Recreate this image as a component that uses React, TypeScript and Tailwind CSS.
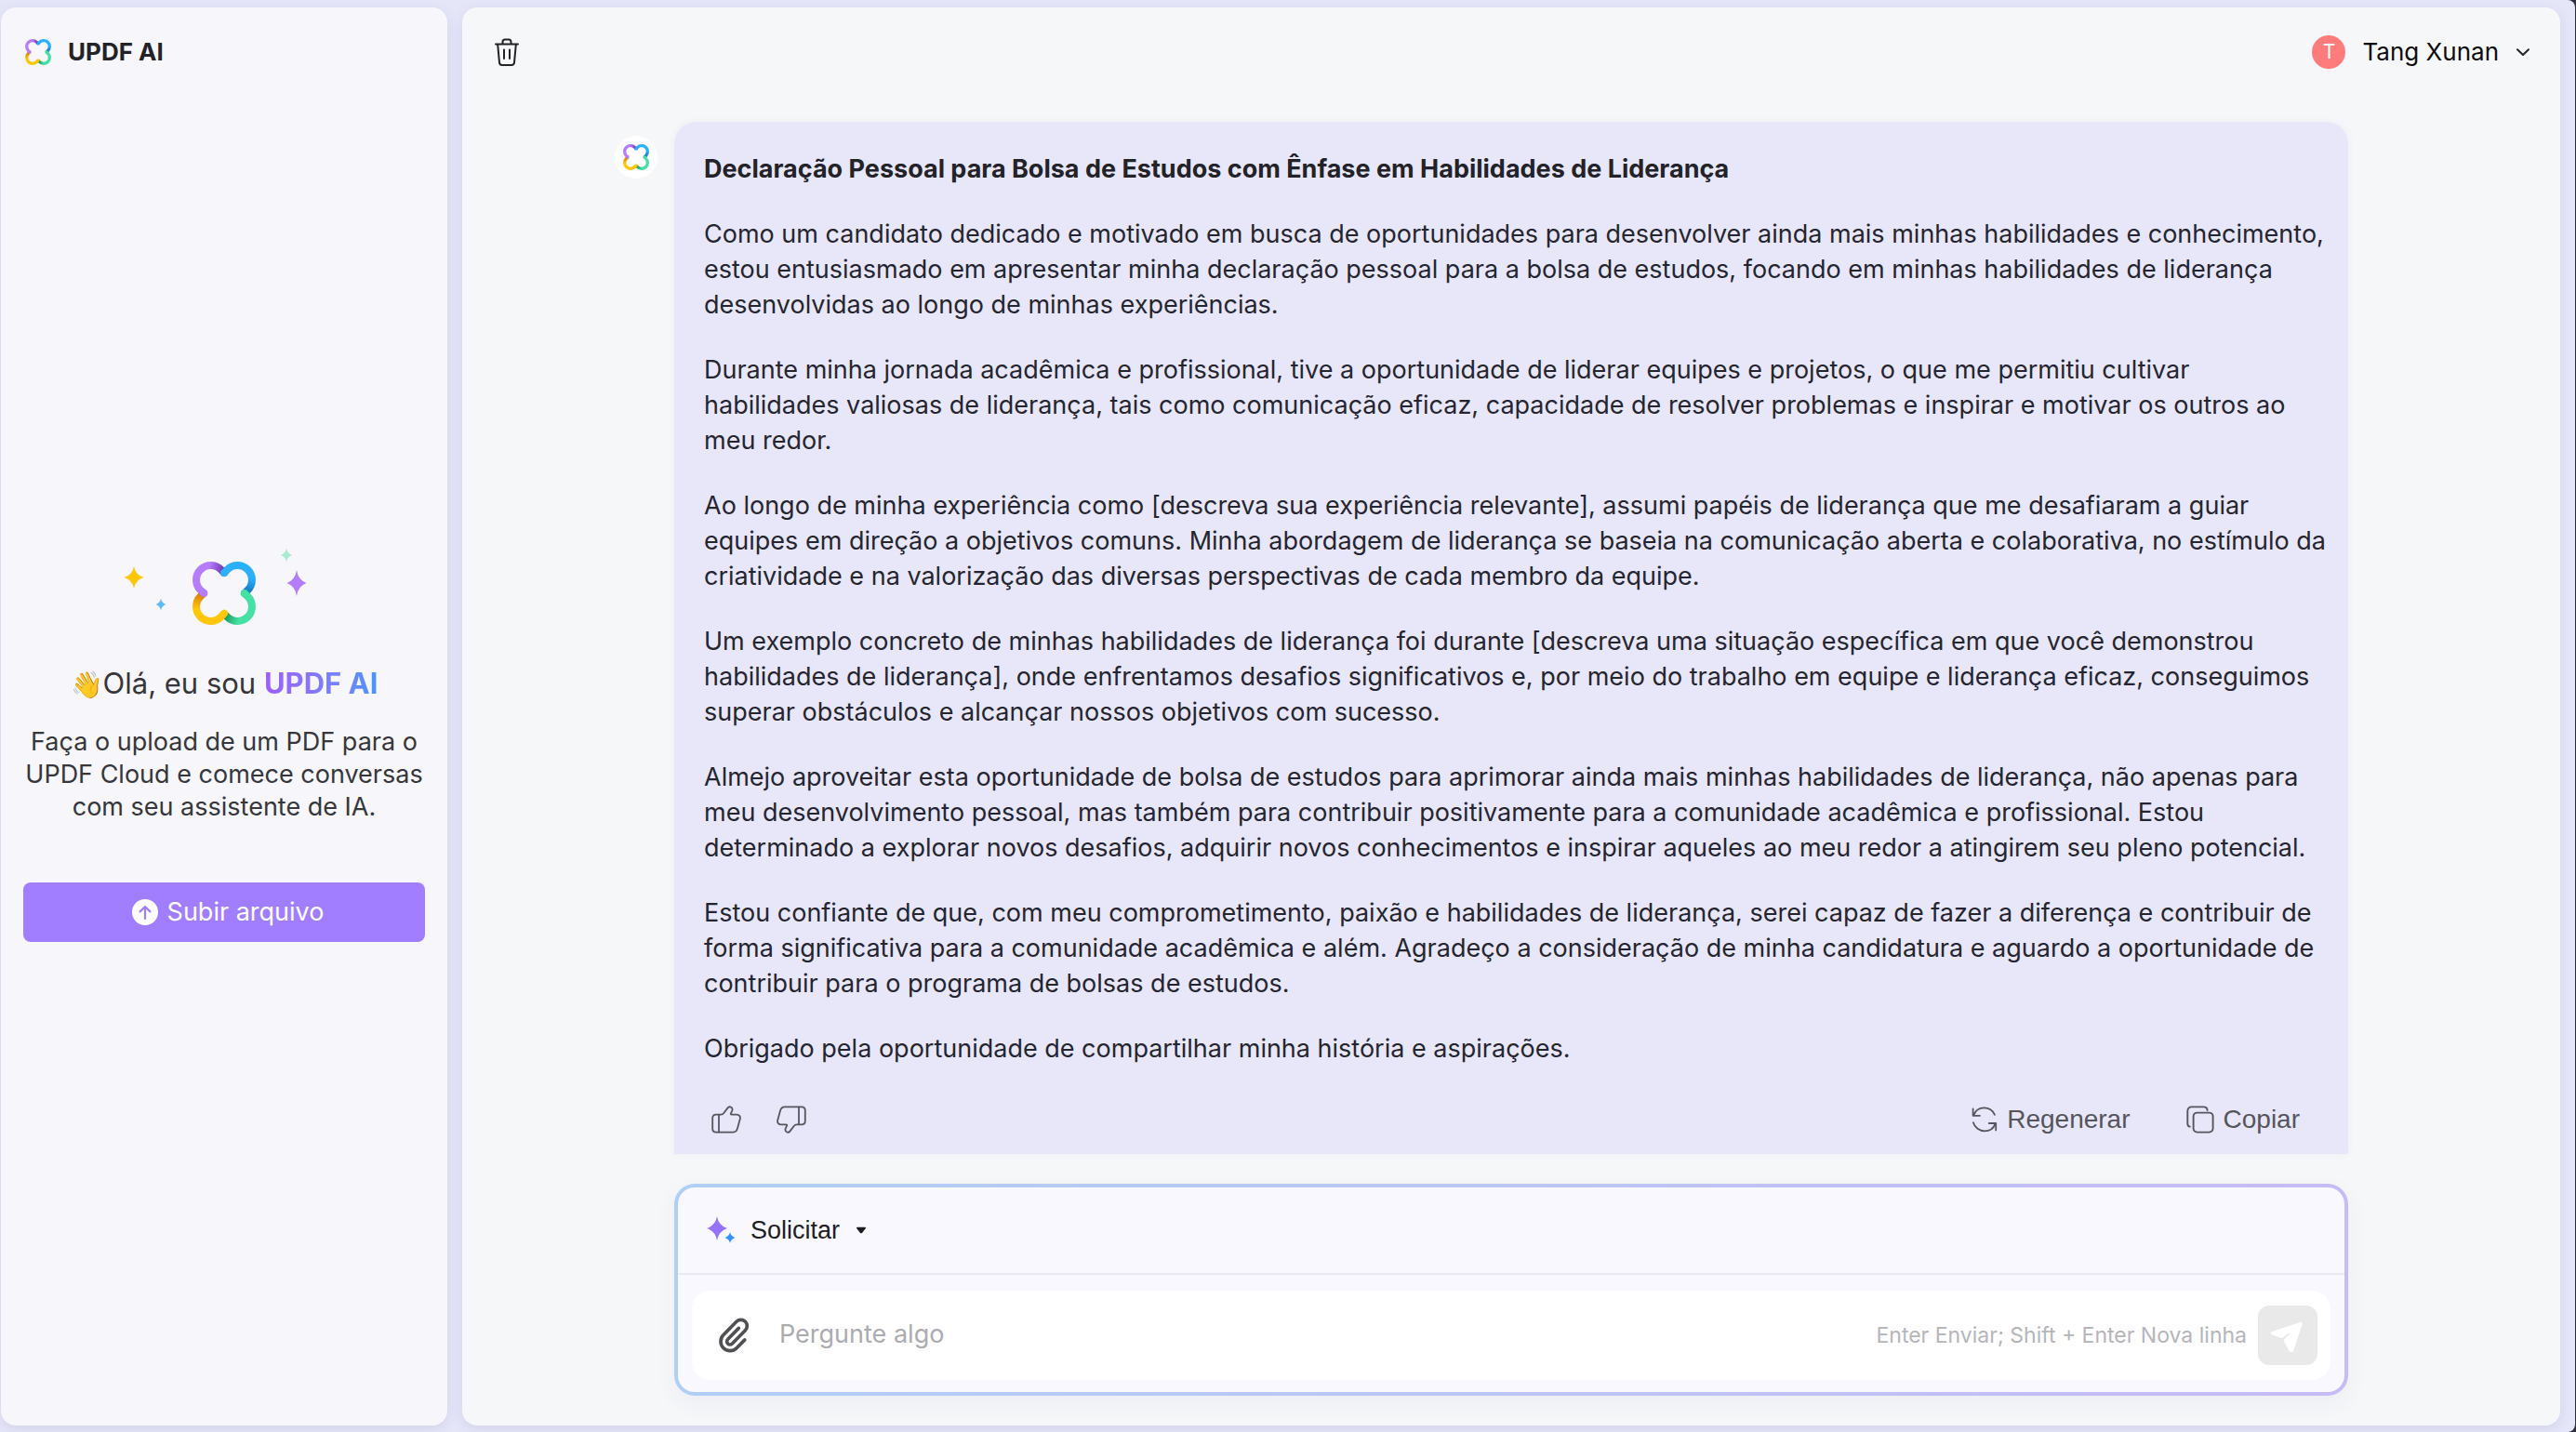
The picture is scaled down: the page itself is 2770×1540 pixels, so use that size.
import React from "react";

const PARAGRAPHS: string[][] = [
  [
    "Como um candidato dedicado e motivado em busca de oportunidades para desenvolver ainda mais minhas habilidades e conhecimento,",
    "estou entusiasmado em apresentar minha declaração pessoal para a bolsa de estudos, focando em minhas habilidades de liderança",
    "desenvolvidas ao longo de minhas experiências.",
  ],
  [
    "Durante minha jornada acadêmica e profissional, tive a oportunidade de liderar equipes e projetos, o que me permitiu cultivar",
    "habilidades valiosas de liderança, tais como comunicação eficaz, capacidade de resolver problemas e inspirar e motivar os outros ao",
    "meu redor.",
  ],
  [
    "Ao longo de minha experiência como [descreva sua experiência relevante], assumi papéis de liderança que me desafiaram a guiar",
    "equipes em direção a objetivos comuns. Minha abordagem de liderança se baseia na comunicação aberta e colaborativa, no estímulo da",
    "criatividade e na valorização das diversas perspectivas de cada membro da equipe.",
  ],
  [
    "Um exemplo concreto de minhas habilidades de liderança foi durante [descreva uma situação específica em que você demonstrou",
    "habilidades de liderança], onde enfrentamos desafios significativos e, por meio do trabalho em equipe e liderança eficaz, conseguimos",
    "superar obstáculos e alcançar nossos objetivos com sucesso.",
  ],
  [
    "Almejo aproveitar esta oportunidade de bolsa de estudos para aprimorar ainda mais minhas habilidades de liderança, não apenas para",
    "meu desenvolvimento pessoal, mas também para contribuir positivamente para a comunidade acadêmica e profissional. Estou",
    "determinado a explorar novos desafios, adquirir novos conhecimentos e inspirar aqueles ao meu redor a atingirem seu pleno potencial.",
  ],
  [
    "Estou confiante de que, com meu comprometimento, paixão e habilidades de liderança, serei capaz de fazer a diferença e contribuir de",
    "forma significativa para a comunidade acadêmica e além. Agradeço a consideração de minha candidatura e aguardo a oportunidade de",
    "contribuir para o programa de bolsas de estudos.",
  ],
  ["Obrigado pela oportunidade de compartilhar minha história e aspirações."],
];

/* Four interlocking petals, drawn on a 204-unit grid. */
function Petals({ id }: { id: string }) {
  return (
    <g fill="none" strokeWidth="24" strokeLinejoin="round">
      <defs>
        <linearGradient id={`${id}-y`} gradientUnits="userSpaceOnUse" x1="34" y1="104" x2="24" y2="156">
          <stop offset="0" stopColor="#d97a04" />
          <stop offset="1" stopColor="#ffc60a" />
        </linearGradient>
        <linearGradient id={`${id}-p`} gradientUnits="userSpaceOnUse" x1="100" y1="34" x2="52" y2="20">
          <stop offset="0" stopColor="#6d35ad" />
          <stop offset="1" stopColor="#b57dfb" />
        </linearGradient>
        <linearGradient id={`${id}-b`} gradientUnits="userSpaceOnUse" x1="174" y1="100" x2="188" y2="52">
          <stop offset="0" stopColor="#1274bd" />
          <stop offset="1" stopColor="#2bb0fd" />
        </linearGradient>
        <linearGradient id={`${id}-g`} gradientUnits="userSpaceOnUse" x1="104" y1="172" x2="150" y2="186">
          <stop offset="0" stopColor="#15985c" />
          <stop offset="1" stopColor="#45e0a3" />
        </linearGradient>
      </defs>
      <path stroke={`url(#${id}-y)`} d="M36 102 L26 112 A46.67 46.67 0 1 0 92 178 L102 168" />
      <path stroke={`url(#${id}-p)`} d="M102 36 L92 26 A46.67 46.67 0 1 0 26 92 L37 102" />
      <circle cx="37" cy="102" r="12" fill="#b57dfb" stroke="none" />
      <path stroke={`url(#${id}-b)`} d="M168 102 L178 92 A46.67 46.67 0 1 0 112 26 L102 37" />
      <circle cx="102" cy="37" r="12" fill="#2bb0fd" stroke="none" />
      <path stroke={`url(#${id}-g)`} d="M102 168 L112 178 A46.67 46.67 0 1 0 178 112 L167 102" />
      <circle cx="167" cy="102" r="12" fill="#45e0a3" stroke="none" />
      <path stroke="#ffc60a" strokeLinecap="round" d="M92 178 L102 167" />
    </g>
  );
}

function Logo({ id }: { id: string }) {
  return (
    <svg viewBox="0 0 204 204" className="size-7 shrink-0" aria-hidden="true">
      <Petals id={id} />
    </svg>
  );
}

function Star({ cx, cy, w, h, fill }: { cx: number; cy: number; w: number; h: number; fill: string }) {
  const a = w * 0.24;
  const b = h * 0.24;
  return (
    <path
      fill={fill}
      d={`M${cx} ${cy - h} Q${cx + a * 0.6} ${cy - b} ${cx + w} ${cy} Q${cx + a * 0.6} ${cy + b} ${cx} ${cy + h} Q${cx - a * 0.6} ${cy + b} ${cx - w} ${cy} Q${cx - a * 0.6} ${cy - b} ${cx} ${cy - h}Z`}
    />
  );
}

function HeroArt() {
  return (
    <svg viewBox="0 0 220 90" className="h-[90px] w-[220px]" aria-hidden="true">
      <Star cx={13} cy={36} w={10.5} h={12} fill="#ffc60a" />
      <Star cx={42} cy={65} w={5.5} h={6.5} fill="#5cbcfa" />
      <Star cx={177} cy={12} w={6} h={7.5} fill="#a8ebcf" />
      <Star cx={188} cy={42} w={10.5} h={14} fill="#b57dfb" />
      <g transform="translate(76 19) scale(0.3333)">
        <Petals id="hero" />
      </g>
    </svg>
  );
}

function ThumbUp({ className }: { className: string }) {
  return (
    <svg viewBox="0 0 32 30" className={className} fill="none" stroke="#55555e" strokeWidth="1.8" strokeLinejoin="round" strokeLinecap="round" aria-hidden="true">
      <path d="M5 9.6H10.4C11.8 9.6 12.6 9 13.3 8L17.6 2.4C18.6 1.1 20.2 1 21.4 1.9C22.7 2.9 22.8 4.2 22.2 5.6L20.9 8.3C20.6 9.1 20.8 9.6 21.7 9.6H27C29.7 9.6 31.4 11.5 30.8 14.2L28 24.4C27.3 27.2 26 28.6 23.2 28.6H5C2.6 28.6 1.2 27.2 1.2 24.8V13.4C1.2 11 2.6 9.6 5 9.6Z" />
      <path d="M8 9.8V28.4" />
    </svg>
  );
}

export default function App() {
  return (
    <div className="min-h-screen bg-[#2f2e3c] pr-px font-['Inter','Liberation_Sans',sans-serif] text-[#25252d]">
      <div className="flex min-h-screen gap-4 rounded-r-lg bg-[#e6e6f9] pt-2 pr-4 pb-[7px] pl-px">
        <aside className="flex w-[480px] shrink-0 flex-col rounded-2xl bg-[#f6f6fb] shadow-[0_4px_14px_rgba(80,80,130,0.12)]">
          <header className="flex h-24 items-center gap-[18px] px-[26px]">
            <Logo id="brand" />
            <h1 className="text-[26px] leading-8 font-bold text-[#232327]">UPDF AI</h1>
          </header>
          <div className="flex flex-1 flex-col items-center justify-center px-6 pb-10">
            <HeroArt />
            <h2 className="mt-10 text-[31px] leading-10 whitespace-nowrap text-[#36363b]">
              <span className="text-[28px]">👋</span>Olá, eu sou{" "}
              <span className="bg-gradient-to-r from-[#a05cff] to-[#4a93ff] bg-clip-text font-bold text-transparent">UPDF AI</span>
            </h2>
            <p className="mt-6 text-center text-[27px] leading-[35px] whitespace-nowrap text-[#36363b]">
              Faça o upload de um PDF para o
              <br />
              UPDF Cloud e comece conversas
              <br />
              com seu assistente de IA.
            </p>
            <button type="button" className="mt-16 flex h-16 w-full items-center justify-center gap-2.5 rounded-lg bg-[#a17eff] pl-2 text-[27px] leading-9 text-white">
              <svg viewBox="0 0 28 28" className="size-7" fill="none" aria-hidden="true">
                <circle cx="14" cy="14" r="14" fill="#fff" />
                <path d="M14 21V8.2M8.6 13.4L14 8L19.4 13.4" stroke="#a17eff" strokeWidth="2.2" strokeLinecap="round" strokeLinejoin="round" />
              </svg>
              Subir arquivo
            </button>
          </div>
        </aside>

        <main className="flex min-w-0 flex-1 flex-col rounded-2xl bg-[#f6f7f9] pb-8 shadow-[0_4px_14px_rgba(80,80,130,0.12)]">
          <header className="flex h-24 items-center justify-between pr-[30px] pl-8">
            <button type="button" aria-label="Excluir conversa">
              <svg viewBox="0 0 32 32" className="size-8" fill="none" stroke="#222227" strokeWidth="2" strokeLinecap="round" strokeLinejoin="round" aria-hidden="true">
                <path d="M4 7.5H28M11.5 7.5V5.2C11.5 3.6 12.3 2.6 13.9 2.6H18.1C19.7 2.6 20.5 3.6 20.5 5.2V7.5" />
                <path d="M6.2 8L8 27.4C8.2 29.2 9.2 30 11 30H21C22.8 30 23.8 29.2 24 27.4L25.8 8" />
                <path d="M13 13.5V23M19 13.5V23" />
              </svg>
            </button>
            <button type="button" className="flex items-center text-[26px] leading-8 text-[#0c0c10]">
              <span className="mr-[18px] flex size-9 items-center justify-center rounded-full bg-[#ff7c7c] text-[21px] leading-6 text-white">T</span>
              Tang Xunan
              <svg viewBox="0 0 20 20" className="ml-4 size-5" fill="none" stroke="#222227" strokeWidth="2" strokeLinecap="round" strokeLinejoin="round" aria-hidden="true">
                <path d="M4 7.2L10 13L16 7.2" />
              </svg>
            </button>
          </header>

          <div className="grid grid-cols-[1fr_minmax(0,1800px)_1fr] pt-[27px]">
            <div className="mt-[15px] mr-[18px] flex size-[46px] items-center justify-center justify-self-end rounded-full bg-white">
              <Logo id="avatar" />
            </div>
            <article className="rounded-t-[24px] bg-[#e8e7f9] px-8 pt-8 pb-[15px] shadow-[0_0_8px_rgba(60,60,120,0.05)]">
              <div className="flex flex-col gap-8 text-[27px] leading-[38px] text-[#25252f]">
                <h3 className="font-bold text-[#222228]">Declaração Pessoal para Bolsa de Estudos com Ênfase em Habilidades de Liderança</h3>
                {PARAGRAPHS.map((lines, i) => (
                  <p key={i}>
                    {lines.map((line) => (
                      <span key={line} className="block whitespace-nowrap">
                        {line}
                      </span>
                    ))}
                  </p>
                ))}
              </div>
              <div className="mt-[35px] flex h-11 items-center justify-between pr-5 pl-2 font-['Liberation_Sans',sans-serif] text-[28px] leading-9 text-[#55555e]">
                <div className="flex gap-[38px]">
                  <button type="button" aria-label="Gostei">
                    <ThumbUp className="h-[30px] w-8" />
                  </button>
                  <button type="button" aria-label="Não gostei">
                    <ThumbUp className="h-[30px] w-8 rotate-180" />
                  </button>
                </div>
                <div className="flex gap-[60px]">
                  <button type="button" className="flex items-center gap-2.5">
                    <svg viewBox="0 0 28 28" className="size-7" fill="none" stroke="#55555e" strokeWidth="1.8" strokeLinecap="round" strokeLinejoin="round" aria-hidden="true">
                      <path d="M1.6 2.4V9.8H9M2.2 9.4C4 4.6 8.5 1.4 13.6 1.4C18.6 1.4 22.9 4.4 25 8.8" />
                      <path d="M26.2 25.4V18H18.8M25.6 18.4C23.8 23.2 19.3 26.4 14.2 26.4C8.4 26.4 3.5 22.6 1.9 17.2" />
                    </svg>
                    Regenerar
                  </button>
                  <button type="button" className="flex items-center gap-2.5">
                    <svg viewBox="0 0 30 30" className="size-[30px]" fill="none" stroke="#55555e" strokeWidth="1.9" strokeLinecap="round" aria-hidden="true">
                      <rect x="7.6" y="7.6" width="21" height="21" rx="4" />
                      <path d="M3.8 22.6C2 22.3 1.3 21.2 1.3 19.4V6C1.3 3 2.9 1.4 5.9 1.4H18.6C21.2 1.4 22.4 2.6 22.6 5" />
                    </svg>
                    Copiar
                  </button>
                </div>
              </div>
            </article>
          </div>

          <form
            className="mx-auto mt-auto w-full max-w-[1800px] rounded-[22px] bg-gradient-to-r from-[#b0cff6] to-[#c6bbf6] p-1 shadow-[0_8px_24px_rgba(60,60,90,0.05)]"
            onSubmit={(e) => e.preventDefault()}
          >
            <div className="rounded-[18px] bg-[#f8f8fe]">
              <div className="flex h-[94px] items-center border-b-2 border-[#e9e8f3] px-[30px]">
                <svg viewBox="0 0 32 32" className="size-8" aria-hidden="true">
                  <Star cx={12} cy={14} w={11} h={13} fill="#9672ff" />
                  <Star cx={26} cy={24} w={5.5} h={6} fill="#3391fd" />
                </svg>
                <select aria-label="Modo" className="ml-4 appearance-none bg-transparent font-['Liberation_Sans',sans-serif] text-[27px] leading-9 text-[#1e1e24]">
                  <option>Solicitar</option>
                </select>
                <svg viewBox="0 0 12 8" className="ml-4 h-2 w-3" aria-hidden="true">
                  <path d="M1.6 .8H10.4Q11.4 1 10.8 2L7 6.9Q6 7.8 5 6.9L1.2 2Q.6 1 1.6 .8Z" fill="#1b1b20" />
                </svg>
              </div>
              <div className="px-[15px] pt-[17px] pb-[13px]">
                <div className="flex h-24 items-center rounded-[20px] bg-white pr-3.5 pl-[26px]">
                  <button type="button" aria-label="Anexar arquivo">
                    <svg viewBox="0 0 24 24" className="size-10" fill="none" stroke="#505054" strokeWidth="2.2" strokeLinecap="round" strokeLinejoin="round" aria-hidden="true">
                      <path d="m14.6 7.43-7.014 7.157a2 2 0 0 0 2.829 2.829l8.414-8.586a4 4 0 1 0-5.657-5.657l-8.379 8.551a6 6 0 1 0 8.485 8.485l5.2-5.3" />
                    </svg>
                  </button>
                  <input
                    type="text"
                    aria-label="Pergunta"
                    placeholder="Pergunte algo"
                    className="ml-7 min-w-0 flex-1 bg-transparent pb-0.5 text-[27px] leading-9 outline-none placeholder:text-[#abacb1]"
                  />
                  <span className="text-[23px] leading-8 text-[#b5b5ba]">Enter Enviar; Shift + Enter Nova linha</span>
                  <button type="submit" aria-label="Enviar" className="ml-3 size-16 rounded-[12px] bg-[#e9e9ea]">
                    <svg viewBox="0 0 64 64" className="size-16" fill="#fff" aria-hidden="true">
                      <path d="M15.2 28L45.2 18Q48.2 17.4 47.4 20.4L38.2 48.8Q36.4 51.6 34 49.2L28.3 39.2Q27.5 37.2 28.8 35.8L34 30.4Q34.2 29 32.8 29.8L26.8 34.6Q25.4 35.6 23.8 34.8L14.6 31Q12.4 29.4 15.2 28Z" />
                    </svg>
                  </button>
                </div>
              </div>
            </div>
          </form>
        </main>
      </div>
    </div>
  );
}
